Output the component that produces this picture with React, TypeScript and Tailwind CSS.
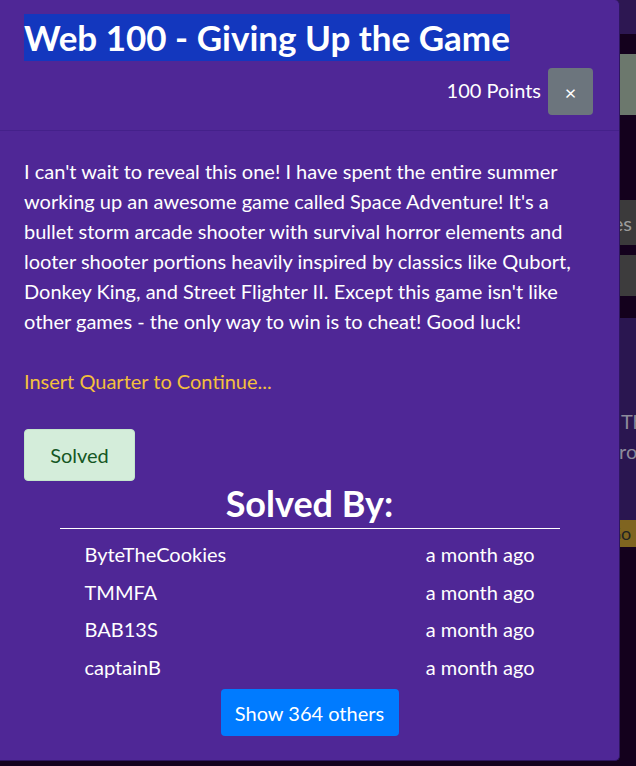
import React from "react";

const lines = [
  "I can't wait to reveal this one! I have spent the entire summer",
  "working up an awesome game called Space Adventure! It's a",
  "bullet storm arcade shooter with survival horror elements and",
  "looter shooter portions heavily inspired by classics like Qubort,",
  "Donkey King, and Street Flighter II. Except this game isn't like",
  "other games - the only way to win is to cheat! Good luck!",
];

const solvers = ["ByteTheCookies", "TMMFA", "BAB13S", "captainB"];

export default function App() {
  return (
    <div
      className="relative w-[636px] h-[766px] overflow-hidden bg-[#14011d]"
      style={{ fontFamily: "Lato, 'Open Sans', sans-serif" }}
    >
      {/* background page */}
      <div className="flex flex-col pl-[600px]">
        <div className="h-[34px] bg-[#2d1752]" />
        <div className="h-[20px]" />
        <div className="h-[61px] bg-[#6c786d]" />
        <div className="h-[85px]" />
        <div className="h-[45px] bg-[#3b3a3b] flex items-center justify-end pr-[4px] text-[20px] text-[#9c9c9c] whitespace-nowrap">
          es
        </div>
        <div className="h-[10px]" />
        <div className="h-[41px] bg-[#3d3c3d]" />
        <div className="h-[22px]" />
        <div className="h-[202px] bg-[#2a1650] pt-[88px] text-[20px] leading-[30px] text-[#8d8a9b] whitespace-nowrap">
          <div className="pl-[21px]">Th</div>
          <div className="pl-[12px]">fro</div>
        </div>
        <div className="h-[27px] bg-[#7f6420] text-[18px] leading-[27px] text-[#222] pl-[8px] whitespace-nowrap">
          Go
        </div>
      </div>

      {/* modal */}
      <div className="absolute left-0 top-0 w-[620px] h-[761px] bg-[#4f2796] rounded-r-[5px] border-r border-b border-[#2e1660] text-white">
        <div className="pl-[24px] pr-[26px] pb-[15px] border-b border-[#44218a]">
          <div className="pt-[14px] flex">
            <span className="block bg-[#1337be] text-[35px] font-bold leading-[47px] h-[47px] whitespace-nowrap">
              Web 100 - Giving Up the Game
            </span>
          </div>
          <div className="mt-[7px] flex justify-end items-center">
            <span className="text-[20px] leading-[30px] pb-[4px]">100 Points</span>
            <button className="ml-[7px] w-[45px] h-[47px] rounded-[4px] bg-[#6c757d] text-white text-[20px] leading-none flex items-center justify-center">
              ×
            </button>
          </div>
        </div>

        <div className="px-[24px] pt-[25px]">
          <div className="text-[20px] leading-[30px] text-white whitespace-nowrap">
            {lines.map((l, i) => (
              <div key={i}>{l}</div>
            ))}
            <div className="h-[30px]" />
            <div className="text-[#f3c03c]">Insert Quarter to Continue...</div>
          </div>

          <div className="mt-[33px] w-[111px] h-[52px] rounded-[4px] bg-[#d4edda] border border-[#c3e6cb] text-[#155724] text-[20px] flex items-center justify-center">
            Solved
          </div>

          <div className="text-center text-[36px] font-bold leading-[44px]">Solved By:</div>
          <div className="mx-auto mt-[3px] w-[500px] h-px bg-white" />

          <div className="mx-auto mt-[6px] w-[474px] flex flex-col text-[20px] leading-[30px]">
            {solvers.map((s) => (
              <div key={s} className="flex justify-between px-[12px] py-[4px] h-[37.5px]">
                <span>{s}</span>
                <span>a month ago</span>
              </div>
            ))}
          </div>

          <div className="mt-[4px] flex justify-center">
            <button className="w-[178px] h-[47px] rounded-[4px] bg-[#007bff] text-white text-[20px]">
              Show 364 others
            </button>
          </div>
        </div>
      </div>
    </div>
  );
}
